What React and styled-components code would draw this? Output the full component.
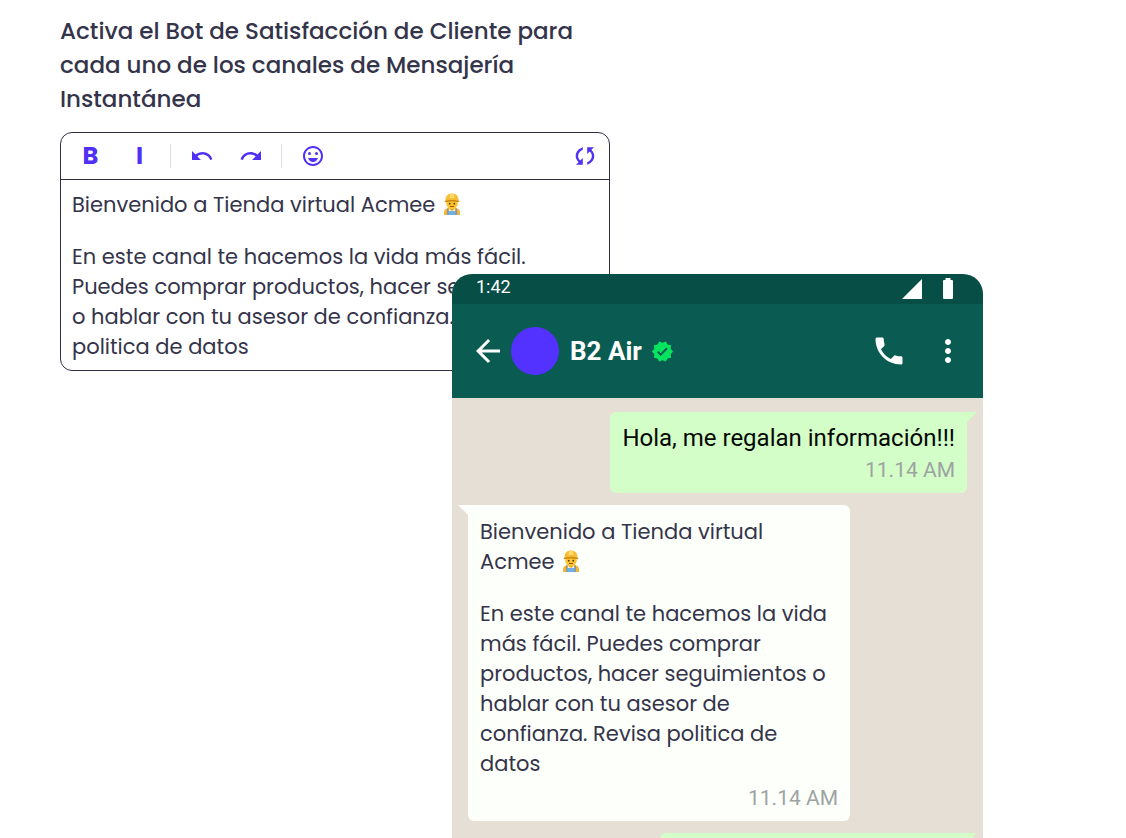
import React from "react";
import styled, { createGlobalStyle } from "styled-components";
import {
  MdArrowBack,
  MdMoreVert,
  MdOutlineEmojiEmotions,
  MdPhone,
  MdRedo,
  MdUndo,
  MdVerified,
} from "react-icons/md";

const GlobalStyle = createGlobalStyle`
  * {
    box-sizing: border-box;
  }
  body {
    margin: 0;
    background: #ffffff;
    color: #34344a;
    font-family: Poppins, Inter, sans-serif;
  }
  p, h1, h2 {
    margin: 0;
  }
`;

const Page = styled.main`
  display: grid;
  grid-template-columns: 60px 392fr 158fr 373fr 143px;
  align-items: start;
  height: 100vh;
  overflow: hidden;
`;

const Compose = styled.section`
  grid-column: 2 / 4;
  grid-row: 1;
  padding-top: 14px;
`;

const Title = styled.h1`
  margin-bottom: 16px;
  padding-right: 24px;
  font-size: 23px;
  font-weight: 500;
  line-height: 34px;
`;

const Editor = styled.div`
  border: 1px solid #2f2f45;
  border-radius: 12px;
`;

const Toolbar = styled.div`
  display: flex;
  align-items: center;
  height: 47px;
  padding: 0 0 1px 5px;
  border-bottom: 1px solid #2f2f45;
`;

const ToolButton = styled.button`
  display: flex;
  align-items: center;
  justify-content: center;
  width: 49px;
  height: 40px;
  padding: 0;
  border: 0;
  background: none;
  color: #5130f5;
  font-family: inherit;
  font-size: 24px;
  font-weight: 700;
  cursor: pointer;
  margin-left: ${(props) => (props.$end ? "auto" : "0")};
`;

const Separator = styled.span`
  width: 1px;
  height: 24px;
  margin: 0 6px;
  background: #dcdce2;
`;

const EditorBody = styled.div`
  padding: 10px 16px 8px 11px;
  outline: none;
`;

const Paragraph = styled.p`
  font-size: 21px;
  line-height: 30px;

  & + & {
    margin-top: 22px;
  }
`;

const Emoji = styled.svg`
  width: 18px;
  height: 22px;
  margin-left: 2px;
  vertical-align: -3px;
`;

const Phone = styled.section`
  grid-column: 3 / 5;
  grid-row: 1;
  z-index: 1;
  margin-top: 274px;
  overflow: hidden;
  border-radius: 20px 20px 0 0;
  background: #e6dfd5;
  font-family: Roboto, sans-serif;
`;

const StatusBar = styled.div`
  display: flex;
  align-items: center;
  height: 30px;
  padding: 0 29px 0 24px;
  background: #064e46;
  color: #ffffff;
`;

const Clock = styled.span`
  flex: 1;
  margin-bottom: 4px;
  font-size: 18px;
  line-height: 20px;
`;

const StatusIcons = styled.svg`
  width: 52px;
  height: 22px;
`;

const ChatHeader = styled.header`
  display: flex;
  align-items: center;
  height: 94px;
  padding: 0 17px 0 18px;
  background: #0a5b52;
  color: #ffffff;
`;

const IconButton = styled.button`
  display: flex;
  padding: 0;
  border: 0;
  background: none;
  color: inherit;
  cursor: pointer;
  margin-left: ${(props) => props.$gap || 0}px;
`;

const Avatar = styled.div`
  width: 48px;
  height: 48px;
  margin: 0 11px 0 5px;
  border-radius: 50%;
  background: #5331ff;
`;

const ContactName = styled.h2`
  display: flex;
  flex: 1;
  align-items: center;
  gap: 9px;
  font-size: 26px;
  font-weight: 700;
  line-height: 32px;

  svg {
    color: #06e35f;
  }
`;

const Messages = styled.div`
  display: flex;
  flex-direction: column;
  align-items: flex-start;
  gap: 12px;
  padding: 14px 16px;
`;

const Bubble = styled.article`
  position: relative;
  align-self: ${(props) => (props.$sent ? "flex-end" : "flex-start")};
  width: ${(props) => props.$width};
  min-height: 80px;
  padding: 10px 12px 7px;
  border-radius: ${(props) => (props.$sent ? "6px 0 6px 6px" : "0 6px 6px 6px")};
  background: ${(props) => (props.$sent ? "#d3fec7" : "#fdfffb")};

  &::before {
    content: "";
    position: absolute;
    top: 0;
    ${(props) => (props.$sent ? "left: 100%;" : "right: 100%;")}
    width: 10px;
    height: 10px;
    background: inherit;
    clip-path: ${(props) =>
      props.$sent ? "polygon(0 0, 100% 0, 0 100%)" : "polygon(0 0, 100% 0, 100% 100%)"};
  }
`;

const Question = styled.p`
  color: #050805;
  font-size: 24px;
  line-height: 32px;
`;

const Reply = styled.div`
  padding: 2px 0 3px;
  font-family: Poppins, Inter, sans-serif;
`;

const Time = styled.time`
  display: block;
  color: #9da3a3;
  font-size: 21px;
  line-height: 32px;
  text-align: right;
`;

const Worker = () => (
  <Emoji viewBox="0 0 18 22" role="img" aria-label="👷">
    <path d="M1 22v-3c0-2.500 2-3.500 4.500-4h7c2.500.5 4.500 1.500 4.500 4v3z" fill="#f2b632" />
    <path d="M6 15h6v7H6z" fill="#f6f2df" />
    <path d="M5 18h8v4H5z" fill="#6fb1e4" />
    <path d="M4 15.500h1.500V22H4zM12.500 15.500H14V22h-1.500z" fill="#8a98a5" />
    <path d="M6.500 13h5v3L9 18l-2.500-2z" fill="#e9a91f" />
    <ellipse cx="9" cy="10.500" rx="5.800" ry="5.500" fill="#fcc72e" />
    <path d="M2.500 7C2.500 3 5 .5 9 .5S15.500 3 15.500 7l1 1.500c-4-1.200-11-1.200-15 0z" fill="#f4bd35" />
    <path d="M7 1h4l.5 4h-5z" fill="#ffdb66" />
    <path d="M1.500 8.300C5 6.500 13 6.500 16.500 8.300l-1 .9c-4-1-9-1-13 0z" fill="#cb8813" />
    <circle cx="6.700" cy="10.700" r=".9" fill="#503519" />
    <circle cx="11.300" cy="10.700" r=".9" fill="#503519" />
    <path d="M7 13.500h4" stroke="#9b5315" strokeWidth="1" />
  </Emoji>
);

const SyncIcon = () => (
  <svg width="24" height="24" viewBox="0 0 24 24" fill="currentColor">
    <path d="M9.800 3.300v2.500C4.500 8.500 3.800 13.300 7.200 16.600L9.800 14v6.800H3l2.600-2.600C.8 13.500 1.800 6 9.800 3.300z" />
    <path d="M14.200 20.700v-2.500c5.300-2.700 6-7.500 2.600-10.800L14.200 10V3.200H21l-2.600 2.600c4.800 4.700 3.800 12.200-4.200 14.900z" />
  </svg>
);

const App = () => {
  return (
    <Page>
      <GlobalStyle />
      <Compose>
        <Title id="editor-title">
          Activa el Bot de Satisfacción de Cliente para cada uno de los canales de Mensajería
          Instantánea
        </Title>
        <Editor>
          <Toolbar role="toolbar">
            <ToolButton aria-label="Negrita">B</ToolButton>
            <ToolButton aria-label="Cursiva">I</ToolButton>
            <Separator />
            <ToolButton aria-label="Deshacer"><MdUndo size={24} /></ToolButton>
            <ToolButton aria-label="Rehacer"><MdRedo size={24} /></ToolButton>
            <Separator />
            <ToolButton aria-label="Emoji"><MdOutlineEmojiEmotions size={24} /></ToolButton>
            <ToolButton $end aria-label="Restablecer"><SyncIcon /></ToolButton>
          </Toolbar>
          <EditorBody
            contentEditable
            suppressContentEditableWarning
            spellCheck={false}
            role="textbox"
            aria-multiline="true"
            aria-labelledby="editor-title"
          >
            <Paragraph>Bienvenido a Tienda virtual Acmee <Worker /></Paragraph>
            <Paragraph>
              En este canal te hacemos la vida más fácil. Puedes comprar productos, hacer
              seguimientos o hablar con tu asesor de confianza. Revisa politica de datos
            </Paragraph>
          </EditorBody>
        </Editor>
      </Compose>

      <Phone>
        <StatusBar>
          <Clock>1:42</Clock>
          <StatusIcons viewBox="0 0 52 22" fill="#ffffff" aria-hidden="true">
            <path d="M0 21L20 1v20z" />
            <path d="M43.500 0h5v2H50q1 0 1 1v17q0 1-1 1h-8q-1 0-1-1V3q0-1 1-1h1.500z" />
          </StatusIcons>
        </StatusBar>
        <ChatHeader>
          <IconButton aria-label="Volver"><MdArrowBack size={36} /></IconButton>
          <Avatar />
          <ContactName>B2 Air <MdVerified size={23} /></ContactName>
          <IconButton aria-label="Llamar"><MdPhone size={36} /></IconButton>
          <IconButton $gap={23} aria-label="Más opciones"><MdMoreVert size={36} /></IconButton>
        </ChatHeader>
        <Messages>
          <Bubble $sent>
            <Question>Hola, me regalan información!!!</Question>
            <Time>11.14 AM</Time>
          </Bubble>
          <Bubble $width="382px">
            <Reply>
              <Paragraph>Bienvenido a Tienda virtual Acmee <Worker /></Paragraph>
              <Paragraph>
                En este canal te hacemos la vida más fácil. Puedes comprar productos, hacer
                seguimientos o hablar con tu asesor de confianza. Revisa politica de datos
              </Paragraph>
            </Reply>
            <Time>11.14 AM</Time>
          </Bubble>
          <Bubble $sent $width="307px" />
        </Messages>
      </Phone>
    </Page>
  );
};

export default App;
